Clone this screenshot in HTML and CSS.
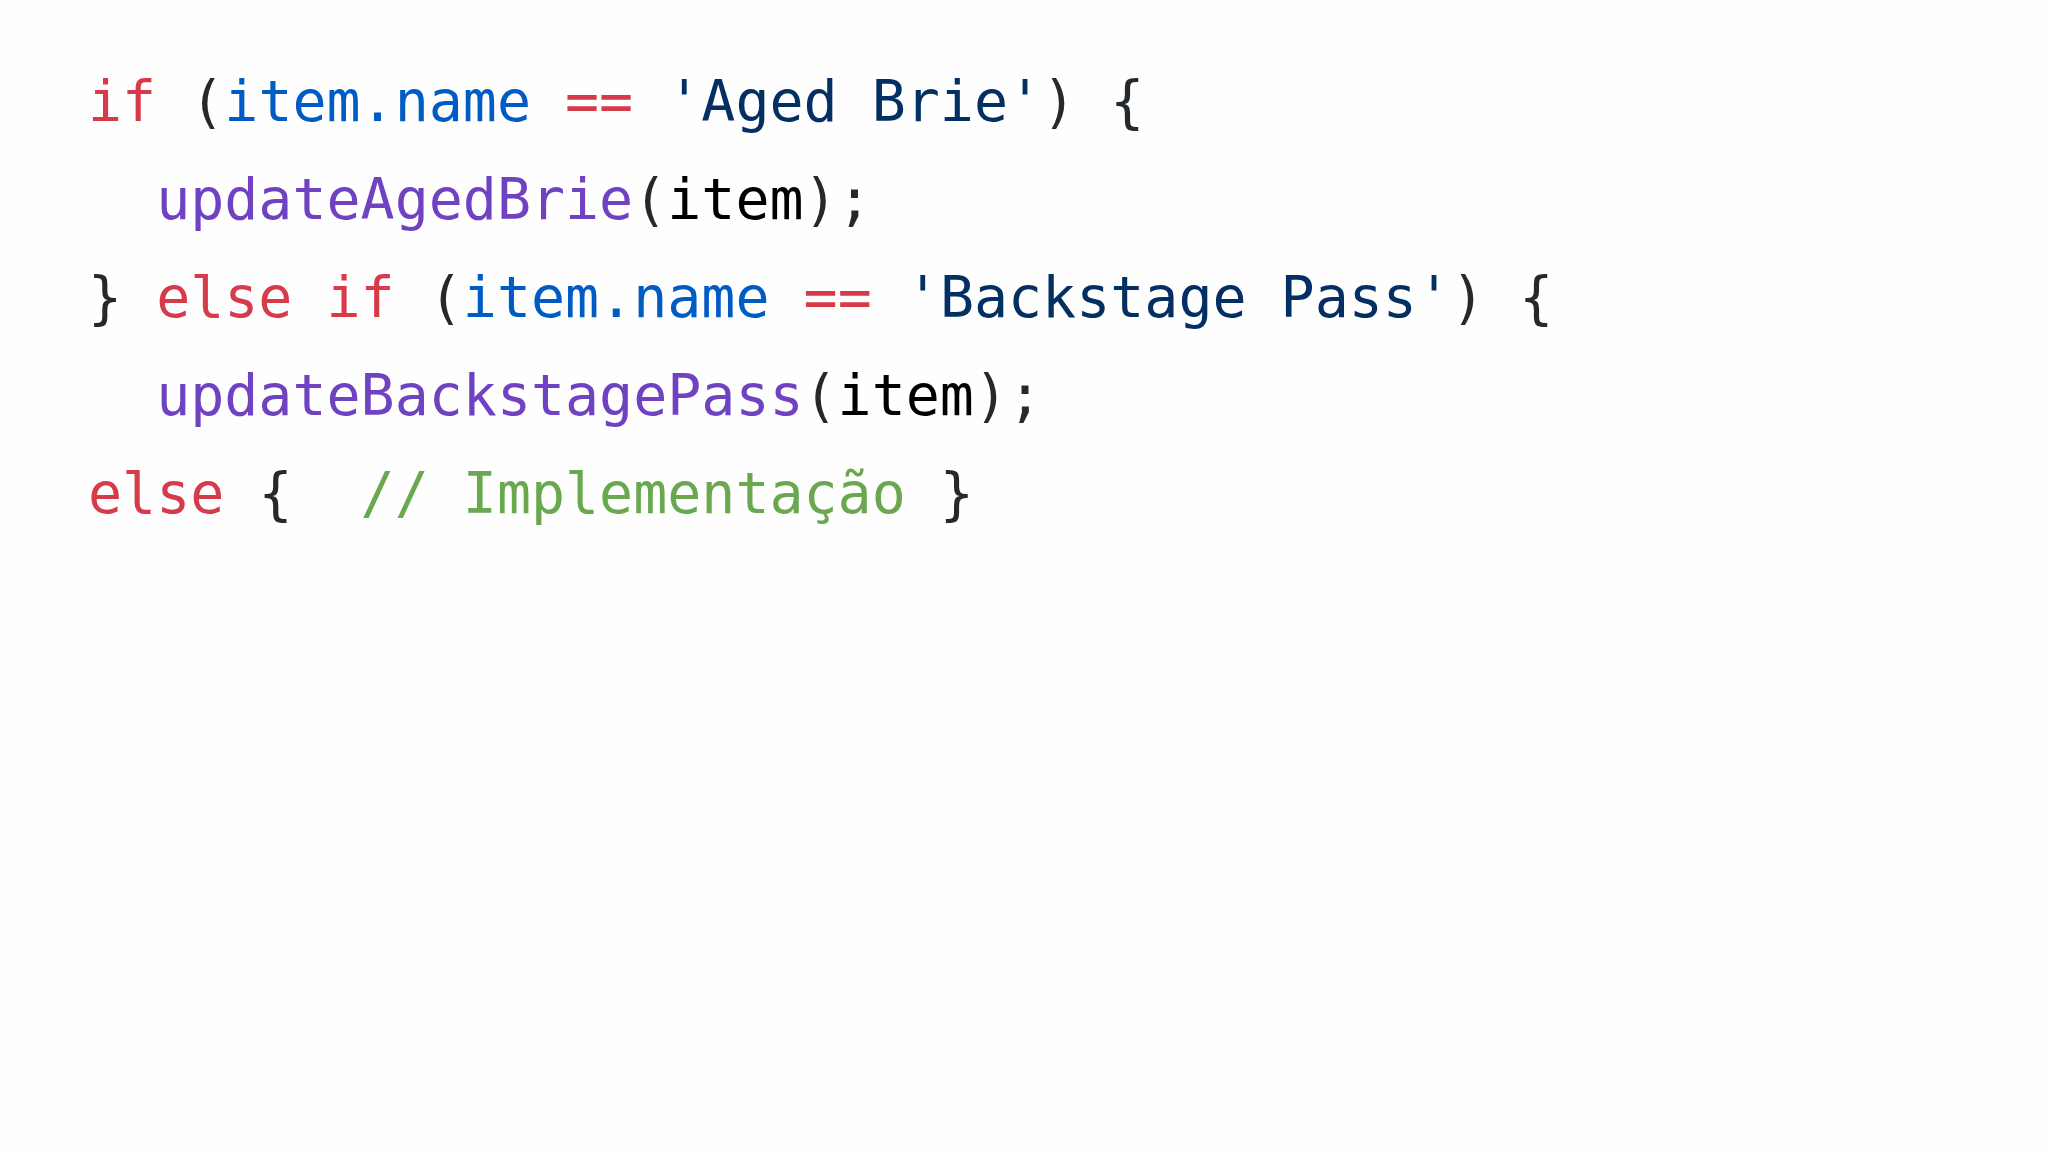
FILE: index.html
```html
<!DOCTYPE html>
<html lang="pt">
<head>
<meta charset="utf-8">
<title>Code</title>
<link rel="stylesheet" href="styles.css">
</head>
<body>
<main class="slide">
<pre class="code"><span class="kw">if</span> <span class="p">(</span><span class="prop">item.name</span> <span class="kw">==</span> <span class="str">'Aged Brie'</span><span class="p">)</span> <span class="p">{</span>
  <span class="fn">updateAgedBrie</span><span class="p">(</span><span class="var">item</span><span class="p">);</span>
<span class="p">}</span> <span class="kw">else</span> <span class="kw">if</span> <span class="p">(</span><span class="prop">item.name</span> <span class="kw">==</span> <span class="str">'Backstage Pass'</span><span class="p">)</span> <span class="p">{</span>
  <span class="fn">updateBackstagePass</span><span class="p">(</span><span class="var">item</span><span class="p">);</span>
<span class="kw">else</span> <span class="p">{</span>  <span class="cm">// Implementação</span> <span class="p">}</span></pre>
</main>
</body>
</html>
```

FILE: styles.css
```css
html, body {
  margin: 0;
  padding: 0;
  background: #fefefe;
}

.slide {
  width: 2048px;
  height: 1152px;
  box-sizing: border-box;
  padding: 52px 0 0 88px;
}

.code {
  margin: 0;
  font-family: "DejaVu Sans Mono", "Liberation Mono", monospace;
  font-size: 56.6px;
  line-height: 98px;
  white-space: pre;
  color: #24292e;
}

.kw { color: #d73a49; }
.prop { color: #005cc5; }
.str { color: #032f62; }
.fn { color: #6f42c1; }
.var { color: #000000; }
.p { color: #24292e; }
.cm { color: #69a84f; }
```
